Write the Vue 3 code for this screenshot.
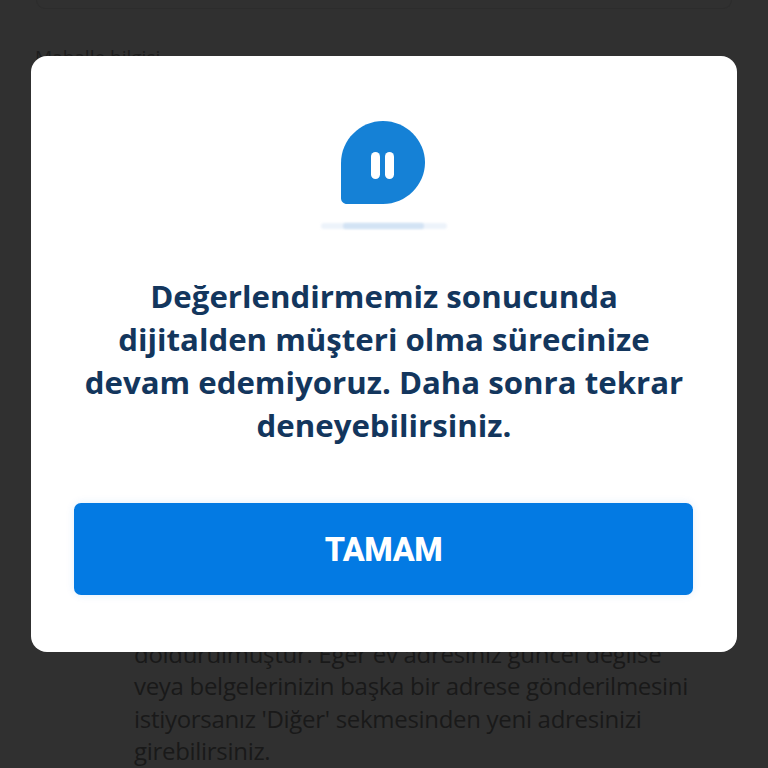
<script setup>
const titleLines = [
  'Değerlendirmemiz sonucunda',
  'dijitalden müşteri olma sürecinize',
  'devam edemiyoruz. Daha sonra tekrar',
  'deneyebilirsiniz.'
]
const noteLines = [
  'Adres bilgileriniz sistemde kayıtlı adresinize',
  'göre otomatik olarak',
  'doldurulmuştur. Eğer ev adresiniz güncel değilse',
  'veya belgelerinizin başka bir adrese gönderilmesini',
  "istiyorsanız 'Diğer' sekmesinden yeni adresinizi",
  'girebilirsiniz.'
]
</script>

<template>
  <div class="page">
    <div class="topcard"></div>
    <div class="label">Mahalle bilgisi</div>
    <div class="note">
      <p v-for="line in noteLines" :key="line">{{ line }}</p>
    </div>
    <div class="modal">
      <svg class="icon" width="130" height="114" viewBox="0 0 130 114">
        <defs>
          <filter id="soft" x="-10%" y="-100%" width="120%" height="300%">
            <feGaussianBlur stdDeviation="1.2" />
          </filter>
        </defs>
        <path d="M22 43 C22 20 41 1 64 1 C87 1 106 20 106 42.500 C106 65 87 84 64 84 L28 84 C24.500 84 22 81.500 22 78 Z" fill="#1581d6" />
        <rect x="52" y="32" width="9" height="27" rx="4.500" fill="#fff" />
        <rect x="66" y="32" width="9" height="27" rx="4.500" fill="#fff" />
        <rect x="2" y="103" width="126" height="6" rx="3" fill="#edf3fa" filter="url(#soft)" />
        <rect x="24" y="103" width="81" height="6" rx="3" fill="#d3e3f4" filter="url(#soft)" />
      </svg>
      <h2 class="title">
        <span v-for="line in titleLines" :key="line" class="title-line">{{ line }}</span>
      </h2>
      <button class="btn">TAMAM</button>
    </div>
  </div>
</template>

<style scoped>
.page {
  position: relative;
  width: 768px;
  height: 768px;
  overflow: hidden;
  background: #303030;
  font-family: "Open Sans", sans-serif;
}
.topcard {
  height: 8px;
  margin: 0 36px;
  border: 1px solid #2c2c2c;
  border-top: 0;
  border-radius: 0 0 14px 14px;
}
.label {
  margin: 33px 0 0 35px;
  font-size: 19px;
  line-height: 30px;
  color: #1d1d1d;
}
.note {
  position: absolute;
  left: 134px;
  top: 573px;
  width: 600px;
}
.note p {
  margin: 0;
  font-size: 24px;
  line-height: 32.400px;
  letter-spacing: -0.3px;
  color: #191919;
  white-space: nowrap;
}
.modal {
  position: absolute;
  left: 31px;
  top: 56px;
  width: 706px;
  height: 596px;
  box-sizing: border-box;
  padding: 64px 43px 0;
  display: flex;
  flex-direction: column;
  align-items: center;
  background: #fff;
  border-radius: 16px;
}
.icon {
  display: block;
  flex: none;
}
.title {
  margin: 41px 0 0;
  width: 620px;
  text-align: center;
  font-size: 31.200px;
  line-height: 43px;
  font-weight: 700;
  color: #13365d;
}
.title-line {
  display: block;
  white-space: nowrap;
}
.btn {
  margin: 56px 1px 0 0;
  padding: 2px 0 0;
  width: 619px;
  height: 92px;
  flex: none;
  border: 0;
  border-radius: 7px;
  background: #037ae3;
  color: #fff;
  font-family: Roboto, sans-serif;
  font-size: 32.500px;
  font-weight: 800;
  letter-spacing: -0.4px;
  box-shadow: 0 0 8px rgba(4, 122, 228, 0.12);
}
</style>
